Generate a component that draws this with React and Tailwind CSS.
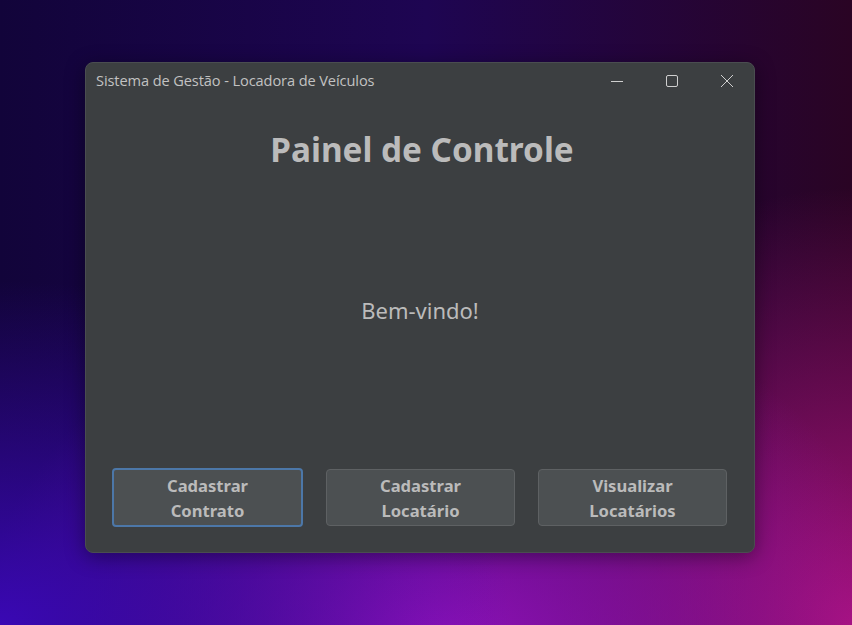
export default function App() {
  const buttons = [
    { top: "Cadastrar", bottom: "Contrato", focused: true },
    { top: "Cadastrar", bottom: "Locatário" },
    { top: "Visualizar", bottom: "Locatários" },
  ];

  return (
    <div className="w-[852px] h-[625px] overflow-hidden bg-[radial-gradient(ellipse_60%_55%_at_0%_100%,#3a08b4_0%,transparent_100%),radial-gradient(ellipse_55%_60%_at_52%_105%,#9512bc_0%,transparent_100%),radial-gradient(ellipse_45%_70%_at_100%_100%,#a8127c_0%,transparent_100%),linear-gradient(to_right,#12043a_0%,#1e0552_50%,#2a0424_100%)] pt-[62px] pl-[85px] font-['Noto_Sans',sans-serif]">
      <div className="w-[670px] h-[491px] bg-[#3c3f41] rounded-lg border border-[#4a4d50] flex flex-col shadow-[0_4px_20px_rgba(0,0,0,0.4)]">
        {/* TITLE BAR */}
        <div className="h-9 flex items-center pl-[10px] shrink-0">
          <span className="text-[14.6px] text-[#c2c2c2] font-['Open_Sans',sans-serif] tracking-[-0.1px]">
            Sistema de Gestão - Locadora de Veículos
          </span>
          <div className="ml-auto flex items-center">
            <WinBtn>
              <svg width="12" height="12" viewBox="0 0 12 12">
                <path d="M0 6.5h12" stroke="#cfcfcf" strokeWidth="1" />
              </svg>
            </WinBtn>
            <WinBtn>
              <svg width="12" height="12" viewBox="0 0 12 12">
                <rect x="0.5" y="0.5" width="11" height="11" rx="1.5" fill="none" stroke="#cfcfcf" strokeWidth="1" />
              </svg>
            </WinBtn>
            <WinBtn>
              <svg width="14" height="14" viewBox="0 0 14 14">
                <path d="M1 1l12 12M13 1L1 13" stroke="#cfcfcf" strokeWidth="1" />
              </svg>
            </WinBtn>
          </div>
        </div>

        {/* HEADING */}
        <h1 className="text-center text-[33.3px] leading-[43px] font-bold text-[#bbbbbb] mt-[29px] pl-[4px]">
          Painel de Controle
        </h1>

        {/* WELCOME */}
        <div className="flex-1 flex items-center justify-center pb-[18px]">
          <span className="text-[22px] text-[#bbbbbb]">Bem-vindo!</span>
        </div>

        {/* BUTTONS */}
        <div className="flex gap-[23px] pl-[26px] pr-[27px] pb-[25px]">
          {buttons.map((b, i) => (
            <button
              key={i}
              className={
                b.focused
                  ? "flex-1 h-[59px] rounded-[4px] bg-[#4c5052] border-2 border-[#4c77a8] text-[#bbbbbb] font-bold text-[16.6px] leading-[25px]"
                  : "flex-1 h-[57px] rounded-[4px] bg-[#4c5052] border border-[#5e6163] text-[#bbbbbb] font-bold text-[16.6px] leading-[25px] my-[1px]"
              }
            >
              {b.top}
              <br />
              {b.bottom}
            </button>
          ))}
        </div>
      </div>
    </div>
  );
}

function WinBtn({ children }) {
  return <div className="w-[55px] h-9 flex items-center justify-center">{children}</div>;
}
